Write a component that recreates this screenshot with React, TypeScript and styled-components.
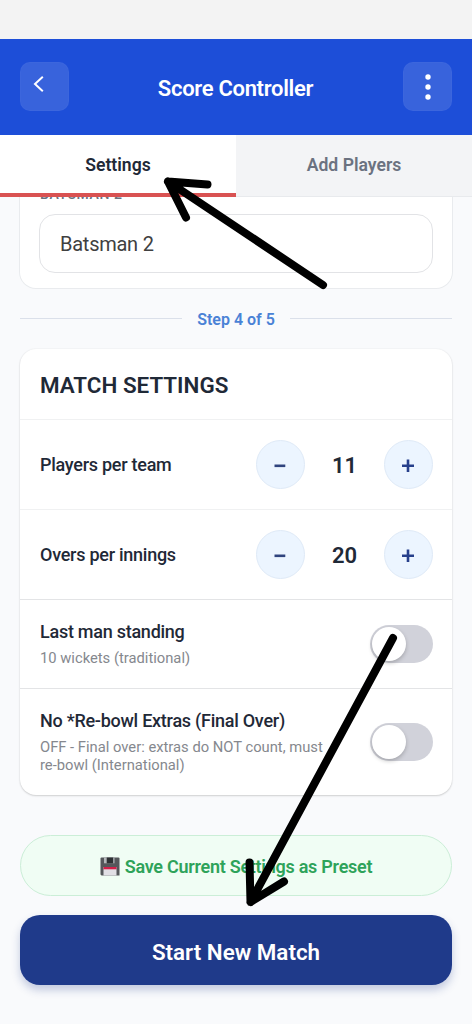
import React, { useState } from "react";
import styled, { createGlobalStyle } from "styled-components";

const GlobalStyle = createGlobalStyle`
  * { box-sizing: border-box; }
  body { margin: 0; background: #f9fafc; font-family: Roboto, "Liberation Sans", sans-serif; color: #1f2937; }
  button, input { font-family: inherit; margin: 0; }
`;

const Screen = styled.div`
  position: relative;
  width: 472px;
  height: 1024px;
  overflow: hidden;
  display: flex;
  flex-direction: column;
  background: #f9fafc;
`;

const StatusBar = styled.div`
  height: 39px;
  flex: none;
  background: #f3f3f3;
`;

const Header = styled.header`
  height: 96px;
  flex: none;
  display: flex;
  align-items: center;
  justify-content: space-between;
  padding: 0 20px 1px;
  background: #1d4ed8;
`;

const Title = styled.h1`
  margin: 4px 1px 0 0;
  font-size: 22px;
  font-weight: 600;
  letter-spacing: -0.3px;
  color: #fff;
`;

const HeaderButton = styled.button`
  width: 49px;
  height: 49px;
  display: flex;
  align-items: center;
  justify-content: center;
  padding: 0;
  border: 1px solid rgba(255, 255, 255, 0.02);
  border-radius: 10px;
  background: rgba(255, 255, 255, 0.12);
`;

const BackIcon = styled.svg`
  margin: 0 11px 3px 0;
`;

const Tabs = styled.nav`
  height: 62px;
  flex: none;
  display: flex;
`;

const Tab = styled.button<{ $active?: boolean }>`
  flex: 1;
  padding: ${(p) => (p.$active ? "2px 0 0" : "0 0 1px")};
  border: 0;
  border-bottom: ${(p) => (p.$active ? "4px solid #d95252" : "1px solid #e8eaed")};
  background: ${(p) => (p.$active ? "#fff" : "#f3f4f6")};
  color: ${(p) => (p.$active ? "#1f2937" : "#6b7280")};
  font-size: 17.6px;
  font-weight: 600;
`;

const Content = styled.main`
  flex: 1;
  min-height: 0;
  overflow: hidden;
  padding: 0 20px;
`;

const Card = styled.section`
  border-radius: 16px;
  background: #fff;
  box-shadow: 0 1px 2px rgba(0, 0, 0, 0.16), 0 0 2px rgba(0, 0, 0, 0.07);
`;

const FieldCard = styled(Card)`
  margin-top: -30px;
  padding: 16px 19px 15px;
  box-shadow: 0 0 0 1px #e9ebee;
`;

const FieldLabel = styled.label`
  display: block;
  height: 31px;
  line-height: 23px;
  padding-left: 1px;
  font-size: 14px;
  font-weight: 500;
  letter-spacing: 0.6px;
  color: #6b7280;
`;

const TextField = styled.input`
  display: block;
  width: 100%;
  height: 59px;
  padding: 1px 20px 0;
  border: 1px solid #e2e3e6;
  border-radius: 16px;
  background: #fff;
  color: #404040;
  font-size: 20px;
  letter-spacing: -0.25px;
`;

const StepDivider = styled.div`
  height: 61px;
  display: flex;
  align-items: center;
  gap: 15px;
  padding-top: 1px;
  color: #4a82d6;
  font-size: 16px;
  font-weight: 600;

  &::before, &::after {
    content: "";
    flex: 1;
    height: 1px;
    margin-bottom: 2px;
    background: #dbe0ea;
  }
`;

const CardTitle = styled.h2`
  height: 70px;
  margin: 0;
  padding: 2px 20px 0;
  display: flex;
  align-items: center;
  font-size: 22.4px;
  font-weight: 600;
`;

const Row = styled.div<{ $height: number; $top?: boolean }>`
  height: ${(p) => p.$height}px;
  display: flex;
  align-items: center;
  justify-content: space-between;
  padding: 0 19px 0 20px;
  border-top: 1px solid ${(p) => (p.$top ? "#f0f1f2" : "#e3e4e6")};
`;

const Label = styled.div`
  font-size: 18px;
  line-height: 22px;
  font-weight: 500;
  letter-spacing: -0.26px;
`;

const Hint = styled.div`
  margin-top: 7px;
  font-size: 14.75px;
  line-height: 17.5px;
  color: #85888e;
  white-space: pre-line;
`;

const Stepper = styled.div`
  display: flex;
  align-items: center;
`;

const StepButton = styled.button`
  width: 49px;
  height: 49px;
  display: flex;
  align-items: center;
  justify-content: center;
  padding: 0 1px 0 0;
  border: 1px solid #dfeaf7;
  border-radius: 50%;
  background: #ecf5ff;
`;

const Count = styled.span`
  width: 79px;
  padding-top: 1px;
  text-align: center;
  font-size: 22px;
  font-weight: 600;
`;

const Switch = styled.button<{ $on: boolean }>`
  width: 63px;
  height: 38px;
  flex: none;
  display: flex;
  align-items: center;
  justify-content: ${(p) => (p.$on ? "flex-end" : "flex-start")};
  padding: 0 2px;
  border: 0;
  border-radius: 19px;
  background: ${(p) => (p.$on ? "#1d4ed8" : "#d1d2da")};
`;

const Thumb = styled.span`
  width: 34px;
  height: 34px;
  border-radius: 50%;
  background: #fff;
  box-shadow: 0 2px 4px rgba(0, 0, 0, 0.22);
`;

const Actions = styled.div`
  display: flex;
  flex-direction: column;
  gap: 19px;
  margin-top: 40px;
`;

const PresetButton = styled.button`
  height: 61px;
  display: flex;
  align-items: center;
  justify-content: center;
  gap: 5px;
  padding: 2px 0 0;
  border: 1px solid #cbeed7;
  border-radius: 31px;
  background: #f0fdf4;
  color: #2ea35a;
  font-size: 18px;
  letter-spacing: -0.27px;
  font-weight: 600;
`;

const StartButton = styled.button`
  height: 70px;
  padding: 3px 0 0;
  border: 0;
  border-radius: 20px;
  background: #1f3a8a;
  box-shadow: 0 5px 9px rgba(31, 58, 138, 0.25);
  color: #fff;
  font-size: 22.4px;
  font-weight: 600;
`;

const Annotations = styled.svg`
  position: absolute;
  inset: 0;
  pointer-events: none;
`;

const SignIcon = ({ plus }: { plus?: boolean }) => (
  <svg width="16" height="16" viewBox="0 0 16 16" stroke={plus ? "#263f8b" : "#30447e"} strokeWidth="2.6">
    <path d={plus ? "M2 8.8H14M8 2.5V15" : "M2.5 8.8H13.3"} />
  </svg>
);

const FloppyIcon = () => (
  <svg width="20" height="19" viewBox="0 0 20 19">
    <path d="M0.5 1.5Q.5.5 1.5.5H18.5Q19.5.5 19.5 1.5V18.5H1.5L.5 17.5Z" fill="#55575b" />
    <path d="M4 0.5H14.5V6.3H4Z" fill="#b4b7ba" />
    <path d="M6.7 0.5H13.2V6.3H6.7Z" fill="#2d3033" />
    <path d="M3.5 10H16.5V18.5H3.5Z" fill="#e1dfe5" />
    <path d="M3.5 10H16.5V12.3H3.5Z" fill="#d31f48" />
  </svg>
);

function Counter({ label, initial }: { label: string; initial: number }) {
  const [value, setValue] = useState(initial);
  return (
    <Row $height={90} $top>
      <Label>{label}</Label>
      <Stepper>
        <StepButton aria-label="Decrease" onClick={() => setValue(value - 1)}><SignIcon /></StepButton>
        <Count>{value}</Count>
        <StepButton aria-label="Increase" onClick={() => setValue(value + 1)}><SignIcon plus /></StepButton>
      </Stepper>
    </Row>
  );
}

function Toggle({ label, hint, height }: { label: string; hint: string; height: number }) {
  const [on, setOn] = useState(false);
  return (
    <Row $height={height}>
      <div>
        <Label>{label}</Label>
        <Hint>{hint}</Hint>
      </div>
      <Switch $on={on} role="switch" aria-checked={on} onClick={() => setOn(!on)}><Thumb /></Switch>
    </Row>
  );
}

export default function App() {
  return (
    <>
      <GlobalStyle />
      <Screen>
        <StatusBar />
        <Header>
          <HeaderButton aria-label="Back">
            <BackIcon width="30" height="30" viewBox="0 0 30 30" fill="none" stroke="#fff" strokeWidth="2">
              <path d="M18.8 6.8L11 14L18.8 21.2" />
            </BackIcon>
          </HeaderButton>
          <Title>Score Controller</Title>
          <HeaderButton aria-label="Menu">
            <svg width="8" height="30" viewBox="0 0 8 30" fill="#fff">
              <circle cx="4" cy="5" r="2.7" />
              <circle cx="4" cy="15" r="2.7" />
              <circle cx="4" cy="25" r="2.7" />
            </svg>
          </HeaderButton>
        </Header>
        <Tabs>
          <Tab $active>Settings</Tab>
          <Tab>Add Players</Tab>
        </Tabs>
        <Content>
          <FieldCard>
            <FieldLabel htmlFor="batsman">BATSMAN 2</FieldLabel>
            <TextField id="batsman" defaultValue="Batsman 2" />
          </FieldCard>
          <StepDivider>Step 4 of 5</StepDivider>
          <Card>
            <CardTitle>MATCH SETTINGS</CardTitle>
            <Counter label="Players per team" initial={11} />
            <Counter label="Overs per innings" initial={20} />
            <Toggle label="Last man standing" hint="10 wickets (traditional)" height={89} />
            <Toggle
              label="No *Re-bowl Extras (Final Over)"
              hint={"OFF - Final over: extras do NOT count, must\nre-bowl (International)"}
              height={107}
            />
          </Card>
          <Actions>
            <PresetButton><FloppyIcon />Save Current Settings as Preset</PresetButton>
            <StartButton>Start New Match</StartButton>
          </Actions>
        </Content>
        <Annotations width="472" height="1024" viewBox="0 0 472 1024" fill="none" stroke="#000" strokeLinecap="round" strokeLinejoin="round">
          <path d="M323 285L168 181.500M207.500 184.500L168 181.500L186 217.500" strokeWidth="8" />
          <path d="M393 638L250.500 902M249.500 862.500L250.500 902L284 881.500" strokeWidth="8" />
        </Annotations>
      </Screen>
    </>
  );
}
